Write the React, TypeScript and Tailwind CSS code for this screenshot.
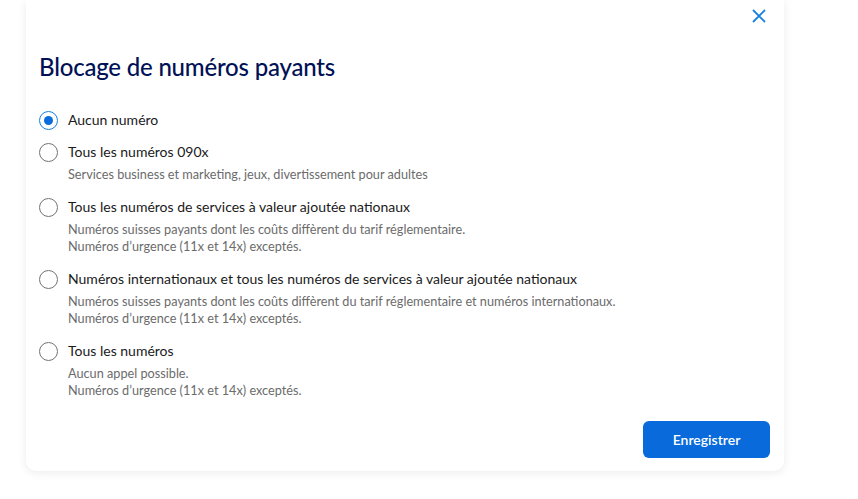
import React, { useState } from 'react';

const options = [
    { label: 'Aucun numéro', desc: [] as string[] },
    { label: 'Tous les numéros 090x', desc: ['Services business et marketing, jeux, divertissement pour adultes'] },
    {
        label: 'Tous les numéros de services à valeur ajoutée nationaux',
        desc: ['Numéros suisses payants dont les coûts diffèrent du tarif réglementaire.', 'Numéros d’urgence (11x et 14x) exceptés.'],
    },
    {
        label: 'Numéros internationaux et tous les numéros de services à valeur ajoutée nationaux',
        desc: [
            'Numéros suisses payants dont les coûts diffèrent du tarif réglementaire et numéros internationaux.',
            'Numéros d’urgence (11x et 14x) exceptés.',
        ],
    },
    { label: 'Tous les numéros', desc: ['Aucun appel possible.', 'Numéros d’urgence (11x et 14x) exceptés.'] },
];

const App = () => {
    const [selected, setSelected] = useState(0);

    return (
        <div className="min-h-[499px] w-full bg-white pl-[26px]" style={{ fontFamily: 'Lato, "Noto Sans", sans-serif' }}>
            <div className="w-[758px] h-[471px] bg-white rounded-b-[10px] shadow-[0_2px_10px_rgba(0,0,0,0.08)] flex flex-col">
                {/* Header */}
                <div className="flex justify-end pt-[9px] pr-[18px]">
                    <button className="w-[14px] h-[14px] text-[#1781e3]">
                        <svg viewBox="0 0 14 14" width="14" height="14" fill="none" stroke="currentColor" strokeWidth="1.8">
                            <path d="M1 1 L13 13 M13 1 L1 13" />
                        </svg>
                    </button>
                </div>

                <h2 className="pl-[13px] mt-[28px] text-[24px] leading-[32px] text-[#001155] font-medium tracking-[-0.2px]">
                    Blocage de numéros payants
                </h2>

                {/* Options */}
                <div className="pl-[13px] mt-[27px] flex flex-col gap-[12px]">
                    {options.map((o, i) => (
                        <label key={i} className="flex gap-[10px] cursor-pointer" onClick={() => setSelected(i)}>
                            <span
                                className={`mt-[0.5px] w-[19px] h-[19px] rounded-full border flex items-center justify-center shrink-0 ${
                                    selected === i ? 'border-[#1781e3] border-[1.5px]' : 'border-[#737373]'
                                }`}
                            >
                                {selected === i && <span className="w-[9px] h-[9px] rounded-full bg-[#0a6cdc]" />}
                            </span>
                            <span className="flex flex-col">
                                <span className="text-[14px] leading-[20px] text-[#1a1a1a]">{o.label}</span>
                                {o.desc.length > 0 && (
                                    <span className="mt-[4px] pb-[2px] flex flex-col">
                                        {o.desc.map((d, j) => (
                                            <span key={j} className="text-[12.7px] leading-[17px] text-[#6b6b6b]">
                                                {d}
                                            </span>
                                        ))}
                                    </span>
                                )}
                            </span>
                        </label>
                    ))}
                </div>

                <div className="mt-auto flex justify-end pr-[14px] pb-[13px]">
                    <button className="w-[127px] h-[37px] rounded-[6px] bg-[#086adb] text-white text-[14px] font-semibold">
                        Enregistrer
                    </button>
                </div>
            </div>
        </div>
    );
};

export default App;
